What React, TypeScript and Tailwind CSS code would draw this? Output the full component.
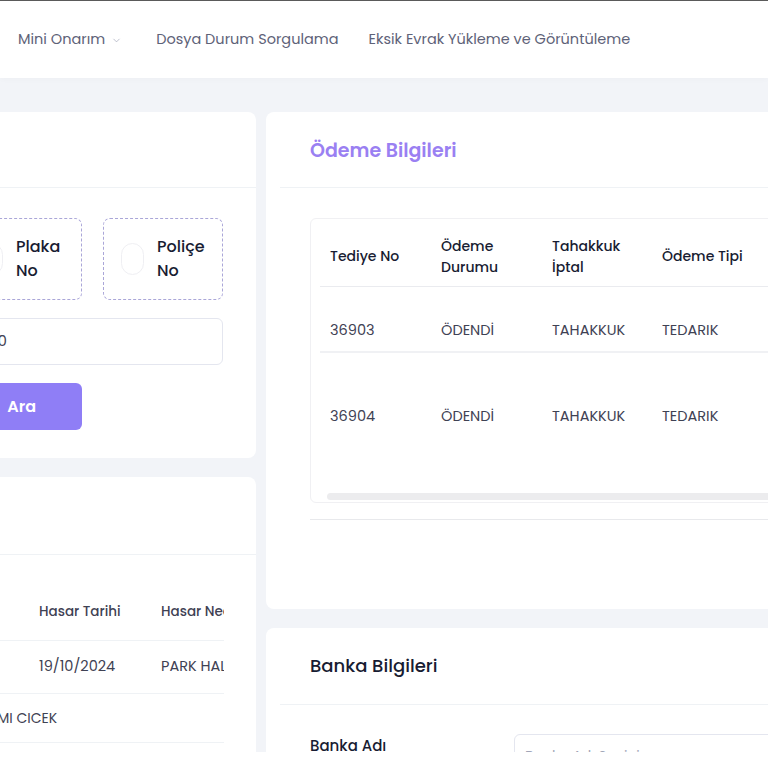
import React from "react";
import { ChevronDown } from "lucide-react";

const font = { fontFamily: "Poppins, Inter, 'Open Sans', sans-serif" };

function RadioBox({ label1, label2 }: { label1: string; label2: string }) {
  return (
    <div className="w-[120px] h-[82px] shrink-0 rounded-[7px] border border-dashed border-[#aaa6d8] flex items-center pl-[17px] gap-[13px]">
      <div className="w-[23px] h-[32px] rounded-full border border-[#efeff3] shrink-0" />
      <div className="text-[16px] leading-[24px] font-medium text-[#181c32]">
        <div>{label1}</div>
        <div>{label2}</div>
      </div>
    </div>
  );
}

function PayRow({ no, h, pt }: { no: string; h: string; pt: string }) {
  return (
    <div className={`flex items-start text-[14.5px] leading-[21px] text-[#3f4254] ${h} ${pt}`}>
      <div className="w-[111px] shrink-0 pl-[10px]">{no}</div>
      <div className="w-[111px] shrink-0 pl-[10px]">ÖDENDİ</div>
      <div className="w-[110px] shrink-0 pl-[10px]">TAHAKKUK</div>
      <div className="w-[110px] shrink-0 pl-[10px]">TEDARIK</div>
    </div>
  );
}

export default function App() {
  return (
    <div className="w-[768px] h-[768px] overflow-hidden bg-white" style={font}>
      <div className="h-[752px] overflow-hidden bg-[#f2f4f8] flex flex-col">
        <div className="h-px bg-[#5b5b5b] shrink-0" />
        <header className="h-[77px] shrink-0 bg-white flex items-center pl-[18px] text-[14.5px] text-[#5e6278] shadow-[0_2px_6px_rgba(0,0,0,0.02)]">
          <div className="flex items-center gap-[6px]">
            <span>Mini Onarım</span>
            <ChevronDown size={11} strokeWidth={1.5} className="text-[#a1a5b7] mt-[1px]" />
          </div>
          <span className="ml-[34px]">Dosya Durum Sorgulama</span>
          <span className="ml-[30px]">Eksik Evrak Yükleme ve Görüntüleme</span>
        </header>

        <div className="flex gap-[10px] pt-[34px] -ml-[212px]">
          {/* Left column */}
          <div className="w-[468px] shrink-0 flex flex-col gap-[19px]">
            <div className="bg-white rounded-[8px] h-[346px]">
              <div className="h-[76px] border-b border-[#eff2f5]" />
              <div className="px-[33px] pt-[30px] flex flex-col gap-[18px]">
                <div className="flex gap-[21px] justify-end">
                  <RadioBox label1="Dosya" label2="No" />
                  <RadioBox label1="Plaka" label2="No" />
                  <RadioBox label1="Poliçe" label2="No" />
                </div>
                <div className="h-[47px] rounded-[6px] border border-[#e4e6ef] flex items-center pl-[14px] text-[15px] text-[#3f4254]">
                  <span className="inline-block w-[171px] text-right whitespace-nowrap overflow-hidden">20240100000</span>
                </div>
                <div className="flex">
                  <div className="ml-[91px] w-[170px] h-[47px] rounded-[6px] bg-[#8f7ef6] text-white font-semibold text-[16px] flex items-center justify-end pr-[46px]">
                    Ara
                  </div>
                </div>
              </div>
            </div>
            <div className="bg-white rounded-[8px] h-[300px]">
              <div className="h-[78px] border-b border-[#eff2f5]" />
              <div className="pl-[33px] pr-[32px] pt-[30px]">
                <div className="overflow-hidden">
                  <div className="flex h-[56px] items-center border-b border-[#eff2f5] font-medium text-[13.5px] text-[#3f4254]">
                    <div className="w-[95px] shrink-0" />
                    <div className="w-[123px] shrink-0" />
                    <div className="w-[122px] shrink-0">Hasar Tarihi</div>
                    <div className="w-[120px] shrink-0 whitespace-nowrap">Hasar Nedeni</div>
                  </div>
                  <div className="flex h-[53px] items-center border-b border-[#eff2f5] text-[14.5px] text-[#3f4254]">
                    <div className="w-[95px] shrink-0" />
                    <div className="w-[123px] shrink-0" />
                    <div className="w-[122px] shrink-0">19/10/2024</div>
                    <div className="w-[120px] shrink-0 whitespace-nowrap">PARK HALİNDE</div>
                  </div>
                  <div className="flex h-[49px] items-center border-b border-[#eff2f5] text-[14px] text-[#3f4254]">
                    <div className="w-[157px] shrink-0" />
                    <div className="whitespace-nowrap">HİLMI CICEK</div>
                  </div>
                </div>
              </div>
            </div>
          </div>

          {/* Right column */}
          <div className="w-[560px] shrink-0 flex flex-col gap-[19px]">
            <div className="bg-white rounded-[8px] h-[497px]">
              <div className="h-[76px] mx-[14px] border-b border-[#eff2f5] flex items-center pl-[30px] pt-[3px]">
                <span className="text-[19px] font-semibold text-[#9a80f2]">Ödeme Bilgileri</span>
              </div>
              <div className="pl-[44px] pt-[30px]">
                <div className="rounded-[6px] border border-[#f0f0f3] pl-[9px] pt-[8px] pb-[2px] flex flex-col">
                  <div className="flex h-[60px] items-center border-b border-[#eaebef] text-[14px] font-medium text-[#181c32] leading-[21px]">
                    <div className="w-[111px] shrink-0 pl-[10px]">Tediye No</div>
                    <div className="w-[111px] shrink-0 pl-[10px]">Ödeme<br />Durumu</div>
                    <div className="w-[110px] shrink-0 pl-[10px]">Tahakkuk<br />İptal</div>
                    <div className="w-[110px] shrink-0 pl-[10px]">Ödeme Tipi</div>
                  </div>
                  <div className="border-b-2 border-[#f0f1f4]">
                    <PayRow no="36903" h="h-[64px]" pt="pt-[33px]" />
                  </div>
                  <PayRow no="36904" h="h-[138px]" pt="pt-[53px]" />
                  <div className="h-[7px] mt-[2px] bg-[#ececee] rounded-full ml-[7px]" />
                </div>
                <div className="mt-[16px] h-px bg-[#e8e9ec]" />
              </div>
            </div>
            <div className="bg-white rounded-[8px] h-[200px]">
              <div className="h-[77px] mx-[14px] border-b border-[#eff2f5] flex items-center pl-[30px] pb-[1px]">
                <span className="text-[18px] font-medium text-[#181c32]">Banka Bilgileri</span>
              </div>
              <div className="pl-[44px] pt-[29px] flex items-start">
                <div className="w-[204px] shrink-0 text-[15px] text-[#181c32] font-medium pt-[1px]">Banka Adı</div>
                <div className="flex-1 h-[44px] rounded-[6px] border border-[#e4e6ef] flex items-center pl-[10px] text-[14px] text-[#a1a5b7]">
                  Banka Adı Seçiniz
                </div>
              </div>
            </div>
          </div>
        </div>
      </div>
    </div>
  );
}
